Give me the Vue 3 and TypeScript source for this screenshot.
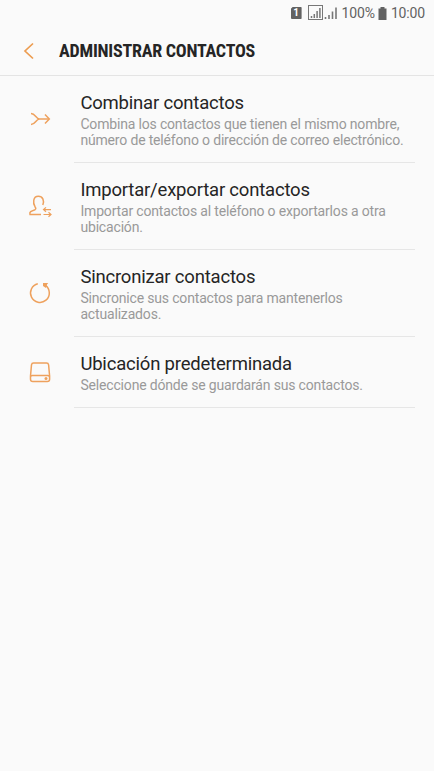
<script setup lang="ts">
type IconName = 'merge' | 'transfer' | 'sync' | 'storage'

interface Item {
  icon: IconName
  title: string
  lines: string[]
}

const items: Item[] = [
  {
    icon: 'merge',
    title: 'Combinar contactos',
    lines: ['Combina los contactos que tienen el mismo nombre,', 'número de teléfono o dirección de correo electrónico.'],
  },
  {
    icon: 'transfer',
    title: 'Importar/exportar contactos',
    lines: ['Importar contactos al teléfono o exportarlos a otra', 'ubicación.'],
  },
  {
    icon: 'sync',
    title: 'Sincronizar contactos',
    lines: ['Sincronice sus contactos para mantenerlos', 'actualizados.'],
  },
  {
    icon: 'storage',
    title: 'Ubicación predeterminada',
    lines: ['Seleccione dónde se guardarán sus contactos.'],
  },
]
</script>

<template>
  <div class="screen">
    <div class="status">
      <span class="sim">1</span>
      <svg class="signal-box" width="16" height="16" viewBox="0 0 16 16">
        <rect x="1.500" y=".5" width="14" height="14" fill="none" stroke="#777" />
        <path d="M4.500 13v-2M7.300 13V9M10.100 13V6M12.900 13V3" fill="none" stroke="#777" stroke-width="1.500" />
      </svg>
      <svg class="signal" width="14" height="14" viewBox="0 0 14 14">
        <path d="M1.500 13v-2M5 13V9M8.500 13V5.500M12 13V1.500" fill="none" stroke="#777" stroke-width="1.600" />
      </svg>
      <span class="percent">100%</span>
      <svg class="battery" width="9" height="13" viewBox="0 0 9 13">
        <path d="M2.500 0h4v1.500H8.500V13H.5V1.500h2z" fill="#626262" />
      </svg>
      <span class="clock">10:00</span>
    </div>
    <header class="header">
      <svg class="back" width="12" height="18" viewBox="0 0 12 18">
        <path d="M10 1.500L2 9l8 7.500" fill="none" stroke="#ec9c50" stroke-width="1.700" />
      </svg>
      <h1>ADMINISTRAR CONTACTOS</h1>
    </header>
    <main>
      <div v-for="item in items" :key="item.icon" class="row">
        <svg class="icon" width="26" height="26" viewBox="0 0 26 26">
          <template v-if="item.icon === 'merge'">
            <path d="M4 7.500C8.500 7.500 9 13 12.500 13M4 18.500C8.500 18.500 9 13 12.500 13M12 13H22" />
            <path d="M18 8.500L22.300 13L18 17.500" />
          </template>
          <template v-else-if="item.icon === 'transfer'">
            <path d="M14 21.500H3C2.200 19 4 18.100 8 16.700C9.200 16 8.900 15 8 13.700C5.700 10 6 3.300 11.300 3.300C16 3.300 17.500 8 15.800 12" />
            <path d="M24 16.600h-7.500M19 14.400l-2.500 2.200l2.500 2.200M16.500 21.500H24M21.500 19.300L24 21.500l-2.500 2.200" stroke-width="1.200" />
          </template>
          <template v-else-if="item.icon === 'sync'">
            <path d="M10.800 3.800A9.400 9.400 0 1 0 18.500 5.400" />
            <path class="solid" d="M16 3h5.200l-1.200 1.500l-1 3.500l-3-2z" />
          </template>
          <template v-else>
            <path d="M6.500 4h13q1.800 0 2.100 1.800l1 11.200v3.200q0 2.300-2.300 2.300H5.800q-2.300 0-2.300-2.300V17l1-11.200Q4.800 4 6.500 4zM3.500 18.200q0-1.700 1.800-1.700h15.500q1.700 0 1.700 1.700" />
            <circle class="solid" cx="19" cy="19.500" r="1.500" />
          </template>
        </svg>
        <div class="copy">
          <h2>{{ item.title }}</h2>
          <p v-for="line in item.lines" :key="line">{{ line }}</p>
        </div>
      </div>
    </main>
  </div>
</template>

<style>
body {
  margin: 0;
  background: #fafafa;
}
</style>

<style scoped>
.screen {
  height: 771px;
  overflow: hidden;
  background: #fafafa;
  color: #252525;
  font-family: Roboto, sans-serif;
}
.status {
  display: flex;
  align-items: center;
  justify-content: flex-end;
  box-sizing: border-box;
  height: 26px;
  padding-right: 9px;
  color: #626262;
  font-size: 14px;
  letter-spacing: -0.15px;
  white-space: nowrap;
}
.sim {
  width: 11px;
  height: 12px;
  margin-right: 5px;
  border-radius: 1px;
  background: #626262;
  clip-path: polygon(2px 0, 100% 0, 100% 100%, 0 100%, 0 2px);
  color: #fff;
  font-size: 10px;
  font-weight: 700;
  line-height: 12px;
  text-align: center;
}
.signal-box {
  margin-right: 1px;
}
.signal {
  margin-right: 4px;
}
.percent {
  margin-right: 3px;
}
.battery {
  margin-right: 4px;
}
.header {
  display: flex;
  align-items: center;
  box-sizing: border-box;
  height: 50px;
  padding-left: 23px;
  border-bottom: 1px solid #e4e4e4;
}
.back {
  margin-right: 24px;
}
h1 {
  margin: 0;
  font-size: 18px;
  font-weight: 700;
  font-stretch: 75%;
  letter-spacing: -0.23px;
  line-height: 24px;
  white-space: nowrap;
}
.row {
  display: flex;
  align-items: center;
  padding: 0 19px 0 27px;
}
.icon {
  flex: none;
  margin: 0 21px 2px 0;
  fill: none;
  stroke: #eea15d;
  stroke-width: 1.500;
}
.solid {
  fill: #eea15d;
  stroke: none;
}
.copy {
  flex: 1;
  padding: 15px 0 14px 6.400px;
  border-bottom: 1px solid #e6e6e6;
  white-space: nowrap;
}
h2 {
  margin: 0 0 1px;
  font-size: 18.500px;
  font-weight: 400;
  letter-spacing: -0.2px;
  line-height: 24px;
}
p {
  margin: 0;
  color: #999;
  font-size: 14px;
  letter-spacing: -0.17px;
  line-height: 16px;
}
</style>
